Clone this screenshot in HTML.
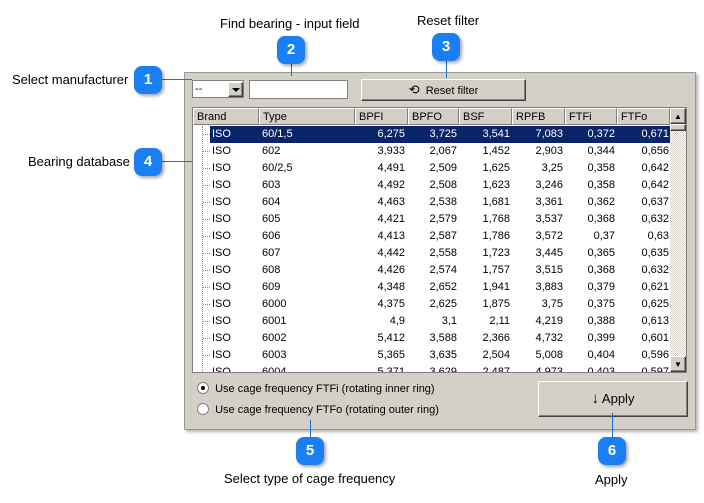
<!DOCTYPE html><html><head><style>
body{margin:0;width:704px;height:503px;background:#fff;position:relative;font-family:"Liberation Sans",sans-serif;overflow:hidden}
.a{position:absolute}
.lbl{font-size:13px;color:#000}
.b{position:absolute;width:28px;height:28px;border-radius:8px;background:#1a7ff2;color:#fff;font-weight:bold;font-size:15px;text-align:center;line-height:28px;box-shadow:2px 2px 3px rgba(0,0,0,.35)}
.ln{position:absolute;background:#1a6fd0}
.panel{left:184px;top:72px;width:510px;height:356px;background:#d4d0c8;border:1px solid #999;box-shadow:2px 2px 3px rgba(0,0,0,.3)}
.s{font-size:11px}
.btn{background:#d4d0c8;border:1px solid;border-color:#fff #404040 #404040 #fff;box-shadow:inset -1px -1px #808080;box-sizing:border-box}
.h{position:absolute;top:0;height:17px;line-height:16px;font-size:11px;padding-left:3px;box-sizing:border-box;border:1px solid;border-color:#fff #808080 #808080 #fff;background:#d4d0c8}
.r{position:absolute;left:0;width:477px;height:17px;font-size:11px;line-height:17px}
.r span{position:absolute;white-space:nowrap}
.sel .hl{position:absolute;left:17px;top:0;width:460px;height:17px;background:#0a246a}
.sel span{color:#fff}
</style></head><body>
<div class="a lbl" style="left:12px;top:72px">Select manufacturer</div>
<div class="a lbl" style="left:28px;top:154px">Bearing database</div>
<div class="a lbl" style="left:220px;top:16px">Find bearing - input field</div>
<div class="a lbl" style="left:417px;top:13px">Reset filter</div>
<div class="a lbl" style="left:224px;top:471px">Select type of cage frequency</div>
<div class="a lbl" style="left:595px;top:472px">Apply</div>

<div class="a panel">
<div class="a" style="left:7px;top:7px;width:52px;height:18px;background:#fff;border:1px solid #808080;font-size:11px;line-height:16px;padding-left:2px;box-sizing:border-box">--</div>
<div class="a btn" style="left:43px;top:9px;width:15px;height:15px"><div style="margin:5px 0 0 3px;width:0;height:0;border-left:4px solid transparent;border-right:4px solid transparent;border-top:4px solid #000"></div></div>
<div class="a" style="left:64px;top:7px;width:99px;height:19px;background:#fff;border:1px solid #808080;box-sizing:border-box"></div>
<div class="a btn s" style="left:176px;top:6px;width:165px;height:22px;text-align:center;line-height:20px"><span style="font-size:13px">⟲</span>&nbsp; Reset filter</div>
<div class="a" style="left:7px;top:34px;width:495px;height:266px;background:#fff;border:1px solid #808080;box-sizing:border-box;overflow:hidden">
<div class="h" style="left:0;width:66px">Brand</div><div class="h" style="left:66px;width:96px">Type</div><div class="h" style="left:162px;width:53px">BPFI</div><div class="h" style="left:215px;width:51px">BPFO</div><div class="h" style="left:266px;width:53px">BSF</div><div class="h" style="left:319px;width:53px">RPFB</div><div class="h" style="left:372px;width:52px">FTFi</div><div class="h" style="left:424px;width:53px">FTFo</div>
<div class="a" style="left:9px;top:18px;width:0;height:250px;border-left:1px dotted #888"></div>
<div id="t"></div>
<div class="a" style="left:477px;top:0;width:16px;height:264px;background:repeating-conic-gradient(#fff 0 25%,#d4d0c8 0 50%) 0 0/2px 2px">
<div class="btn" style="width:16px;height:16px;font-size:8px;text-align:center;line-height:15px">▲</div>
<div class="btn" style="width:16px;height:7px"></div>
<div class="btn" style="position:absolute;top:248px;width:16px;height:16px;font-size:8px;text-align:center;line-height:15px">▼</div>
</div>
</div>
<div class="a s" style="left:12px;top:309px"><span style="display:inline-block;width:10px;height:10px;border-radius:50%;background:#fff;border:1px solid #808080;vertical-align:-2px;position:relative"><span style="position:absolute;left:3px;top:3px;width:4px;height:4px;border-radius:50%;background:#000"></span></span>&nbsp; Use cage frequency FTFi (rotating inner ring)</div>
<div class="a s" style="left:12px;top:330px"><span style="display:inline-block;width:10px;height:10px;border-radius:50%;background:#fff;border:1px solid #808080;vertical-align:-2px"></span>&nbsp; Use cage frequency FTFo (rotating outer ring)</div>
<div class="a btn" style="left:353px;top:308px;width:150px;height:36px;text-align:center;line-height:34px;font-size:13px"><b style="font-size:15px">↓</b> Apply</div>
</div>

<div class="ln" style="left:162px;top:79px;width:30px;height:1px"></div>
<div class="ln" style="left:162px;top:161px;width:30px;height:1px"></div>
<div class="ln" style="left:291px;top:62px;width:1px;height:14px"></div>
<div class="ln" style="left:446px;top:60px;width:1px;height:18px"></div>
<div class="ln" style="left:310px;top:420px;width:1px;height:18px"></div>
<div class="ln" style="left:612px;top:413px;width:1px;height:25px"></div>
<div class="b" style="left:134px;top:66px">1</div>
<div class="b" style="left:277px;top:36px">2</div>
<div class="b" style="left:432px;top:33px">3</div>
<div class="b" style="left:134px;top:148px">4</div>
<div class="b" style="left:296px;top:437px">5</div>
<div class="b" style="left:598px;top:437px">6</div>
<script>
var d=[["60/1,5","6,275","3,725","3,541","7,083","0,372","0,671"],["602","3,933","2,067","1,452","2,903","0,344","0,656"],["60/2,5","4,491","2,509","1,625","3,25","0,358","0,642"],["603","4,492","2,508","1,623","3,246","0,358","0,642"],["604","4,463","2,538","1,681","3,361","0,362","0,637"],["605","4,421","2,579","1,768","3,537","0,368","0,632"],["606","4,413","2,587","1,786","3,572","0,37","0,63"],["607","4,442","2,558","1,723","3,445","0,365","0,635"],["608","4,426","2,574","1,757","3,515","0,368","0,632"],["609","4,348","2,652","1,941","3,883","0,379","0,621"],["6000","4,375","2,625","1,875","3,75","0,375","0,625"],["6001","4,9","3,1","2,11","4,219","0,388","0,613"],["6002","5,412","3,588","2,366","4,732","0,399","0,601"],["6003","5,365","3,635","2,504","5,008","0,404","0,596"],["6004","5,371","3,629","2,487","4,973","0,403","0,597"]];
var R=[0,265,213,160,107,55,1];
var h="";d.forEach(function(r,i){h+='<div class="r'+(i==0?' sel':'')+'" style="top:'+(18+i*17)+'px"><div class="hl"></div><div style="position:absolute;left:10px;top:8px;width:7px;border-top:1px dotted #888"></div><span style="left:19px">ISO</span><span style="left:69px">'+r[0]+'</span>';for(var j=1;j<7;j++)h+='<span style="right:'+R[j]+'px">'+r[j]+'</span>';h+='</div>'});
document.getElementById("t").innerHTML=h;
</script>
</body></html>
